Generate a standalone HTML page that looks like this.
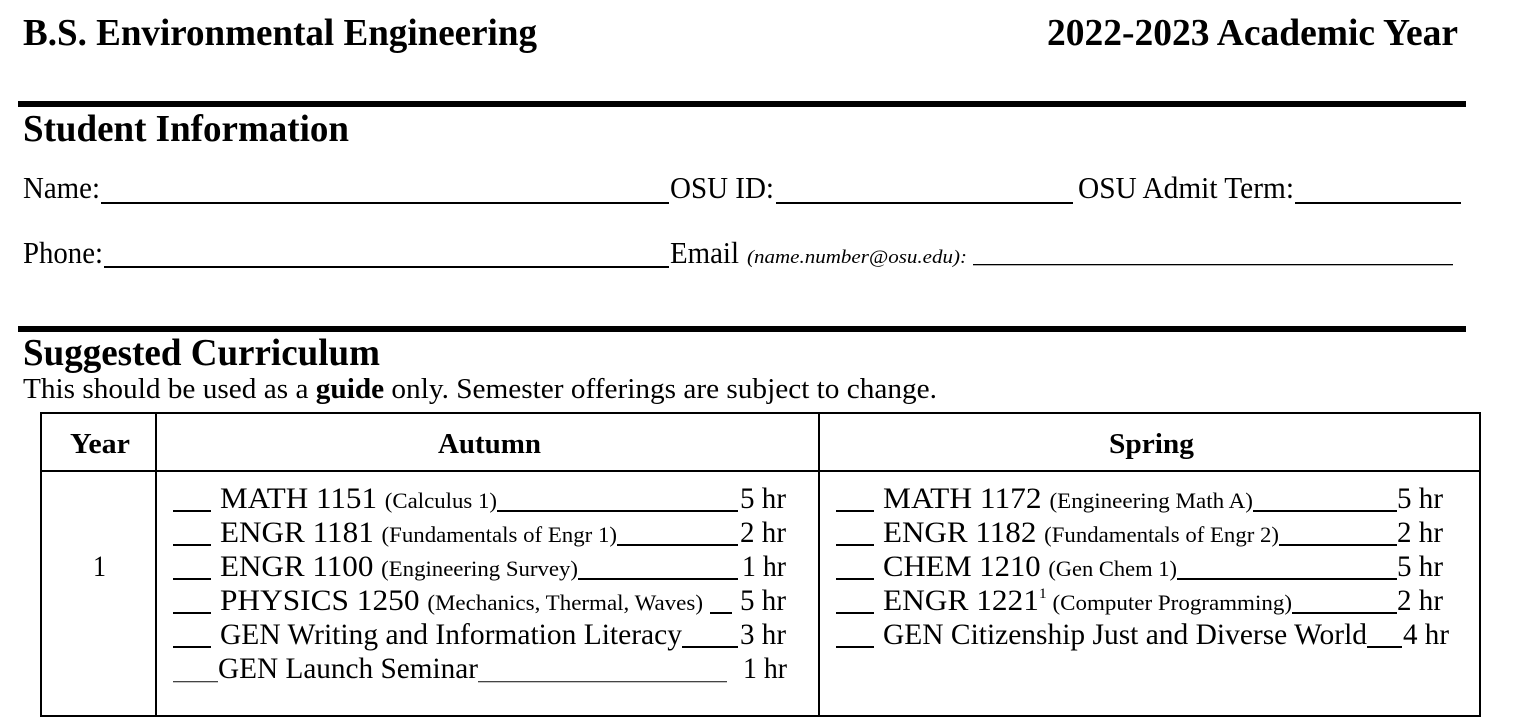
<!DOCTYPE html>
<html><head><meta charset="utf-8"><style>
html,body{margin:0;padding:0;background:#fff;width:1513px;height:719px;overflow:hidden}
svg{display:block}
text{font-family:"Liberation Serif",serif;fill:#000}
.b{font-weight:bold}
</style></head><body>
<svg width="1513" height="719" viewBox="0 0 1513 719" xmlns="http://www.w3.org/2000/svg">
<text class="b" x="23" y="45" font-size="38" textLength="514" lengthAdjust="spacingAndGlyphs">B.S. Environmental Engineering</text>
<text class="b" x="1047" y="45" font-size="38" textLength="411" lengthAdjust="spacingAndGlyphs">2022-2023 Academic Year</text>
<rect x="18" y="101" width="1448" height="6" fill="#000"/>
<text class="b" x="23" y="141" font-size="38" textLength="326" lengthAdjust="spacingAndGlyphs">Student Information</text>

<text x="23" y="198" font-size="31" textLength="77" lengthAdjust="spacingAndGlyphs">Name:</text>
<rect x="101" y="202" width="568" height="2" fill="#000"/>
<text x="670" y="198" font-size="31" textLength="104" lengthAdjust="spacingAndGlyphs">OSU ID:</text>
<rect x="776" y="202" width="297" height="2" fill="#000"/>
<text x="1078" y="198" font-size="31" textLength="216" lengthAdjust="spacingAndGlyphs">OSU Admit Term:</text>
<rect x="1295" y="202" width="166" height="2" fill="#000"/>

<text x="23" y="263" font-size="31" textLength="80" lengthAdjust="spacingAndGlyphs">Phone:</text>
<rect x="104" y="266" width="565" height="2" fill="#000"/>
<text x="670" y="263" font-size="31" textLength="69" lengthAdjust="spacingAndGlyphs">Email</text>
<text x="747" y="263" font-size="19" font-style="italic" textLength="220" lengthAdjust="spacingAndGlyphs">(name.number@osu.edu):</text>
<rect x="973" y="264" width="480" height="1.3" fill="#000"/>

<rect x="18" y="326" width="1448" height="6" fill="#000"/>
<text class="b" x="23" y="365" font-size="38" textLength="357" lengthAdjust="spacingAndGlyphs">Suggested Curriculum</text>
<text x="23" y="398" font-size="29" textLength="914" lengthAdjust="spacingAndGlyphs">This should be used as a <tspan font-weight="bold">guide</tspan> only. Semester offerings are subject to change.</text>

<rect x="41" y="413" width="1439" height="303" fill="none" stroke="#000" stroke-width="2"/>
<rect x="155" y="413" width="2" height="303" fill="#000"/>
<rect x="818" y="413" width="2" height="303" fill="#000"/>
<rect x="41" y="470" width="1439" height="2" fill="#000"/>
<text class="b" x="70" y="453" font-size="29" textLength="60" lengthAdjust="spacingAndGlyphs">Year</text>
<text class="b" x="438" y="453" font-size="29" textLength="103" lengthAdjust="spacingAndGlyphs">Autumn</text>
<text class="b" x="1109" y="453" font-size="29" textLength="85" lengthAdjust="spacingAndGlyphs">Spring</text>
<text x="93" y="576" font-size="30" textLength="13" lengthAdjust="spacingAndGlyphs">1</text>

<g fill="#000">
<rect x="173" y="510" width="38" height="2"/>
<rect x="173" y="544" width="38" height="2"/>
<rect x="173" y="578" width="38" height="2"/>
<rect x="173" y="612" width="38" height="2"/>
<rect x="173" y="646" width="38" height="2"/>
<rect x="173" y="681" width="45" height="1.3" fill="#444"/>
<rect x="497" y="510" width="241" height="2"/>
<rect x="617" y="544" width="121" height="2"/>
<rect x="578" y="578" width="160" height="2"/>
<rect x="710" y="612" width="22" height="2"/>
<rect x="682" y="646" width="56" height="2"/>
<rect x="478" y="681" width="249" height="1.3" fill="#444"/>
<rect x="836" y="510" width="38" height="2"/>
<rect x="836" y="544" width="38" height="2"/>
<rect x="836" y="578" width="38" height="2"/>
<rect x="836" y="612" width="38" height="2"/>
<rect x="836" y="646" width="38" height="2"/>
<rect x="1253" y="510" width="144" height="2"/>
<rect x="1279" y="544" width="118" height="2"/>
<rect x="1177" y="578" width="220" height="2"/>
<rect x="1292" y="612" width="105" height="2"/>
<rect x="1367" y="646" width="35" height="2"/>
</g>

<text x="220" y="508" font-size="30" textLength="277" lengthAdjust="spacingAndGlyphs">MATH 1151 <tspan font-size="22">(Calculus 1)</tspan></text>
<text x="220" y="542" font-size="30" textLength="397" lengthAdjust="spacingAndGlyphs">ENGR 1181 <tspan font-size="22">(Fundamentals of Engr 1)</tspan></text>
<text x="220" y="576" font-size="30" textLength="358" lengthAdjust="spacingAndGlyphs">ENGR 1100 <tspan font-size="22">(Engineering Survey)</tspan></text>
<text x="220" y="610" font-size="30" textLength="483" lengthAdjust="spacingAndGlyphs">PHYSICS 1250 <tspan font-size="22">(Mechanics, Thermal, Waves)</tspan></text>
<text x="220" y="644" font-size="30" textLength="462" lengthAdjust="spacingAndGlyphs">GEN Writing and Information Literacy</text>
<text x="218" y="678" font-size="30" textLength="260" lengthAdjust="spacingAndGlyphs">GEN Launch Seminar</text>
<text x="740" y="508" font-size="30" textLength="46" lengthAdjust="spacingAndGlyphs">5 hr</text>
<text x="740" y="542" font-size="30" textLength="46" lengthAdjust="spacingAndGlyphs">2 hr</text>
<text x="742" y="576" font-size="30" textLength="44" lengthAdjust="spacingAndGlyphs">1 hr</text>
<text x="740" y="610" font-size="30" textLength="46" lengthAdjust="spacingAndGlyphs">5 hr</text>
<text x="740" y="644" font-size="30" textLength="46" lengthAdjust="spacingAndGlyphs">3 hr</text>
<text x="743" y="678" font-size="30" textLength="44" lengthAdjust="spacingAndGlyphs">1 hr</text>

<text x="883" y="508" font-size="30" textLength="370" lengthAdjust="spacingAndGlyphs">MATH 1172 <tspan font-size="22">(Engineering Math A)</tspan></text>
<text x="883" y="542" font-size="30" textLength="396" lengthAdjust="spacingAndGlyphs">ENGR 1182 <tspan font-size="22">(Fundamentals of Engr 2)</tspan></text>
<text x="883" y="576" font-size="30" textLength="294" lengthAdjust="spacingAndGlyphs">CHEM 1210 <tspan font-size="22">(Gen Chem 1)</tspan></text>
<text x="883" y="610" font-size="30" textLength="409" lengthAdjust="spacingAndGlyphs">ENGR 1221<tspan font-size="15" dy="-12">1</tspan><tspan font-size="22" dy="12"> (Computer Programming)</tspan></text>
<text x="883" y="644" font-size="30" textLength="484" lengthAdjust="spacingAndGlyphs">GEN Citizenship Just and Diverse World</text>
<text x="1397" y="508" font-size="30" textLength="46" lengthAdjust="spacingAndGlyphs">5 hr</text>
<text x="1397" y="542" font-size="30" textLength="46" lengthAdjust="spacingAndGlyphs">2 hr</text>
<text x="1397" y="576" font-size="30" textLength="46" lengthAdjust="spacingAndGlyphs">5 hr</text>
<text x="1397" y="610" font-size="30" textLength="46" lengthAdjust="spacingAndGlyphs">2 hr</text>
<text x="1403" y="644" font-size="30" textLength="46" lengthAdjust="spacingAndGlyphs">4 hr</text>
</svg>
</body></html>
